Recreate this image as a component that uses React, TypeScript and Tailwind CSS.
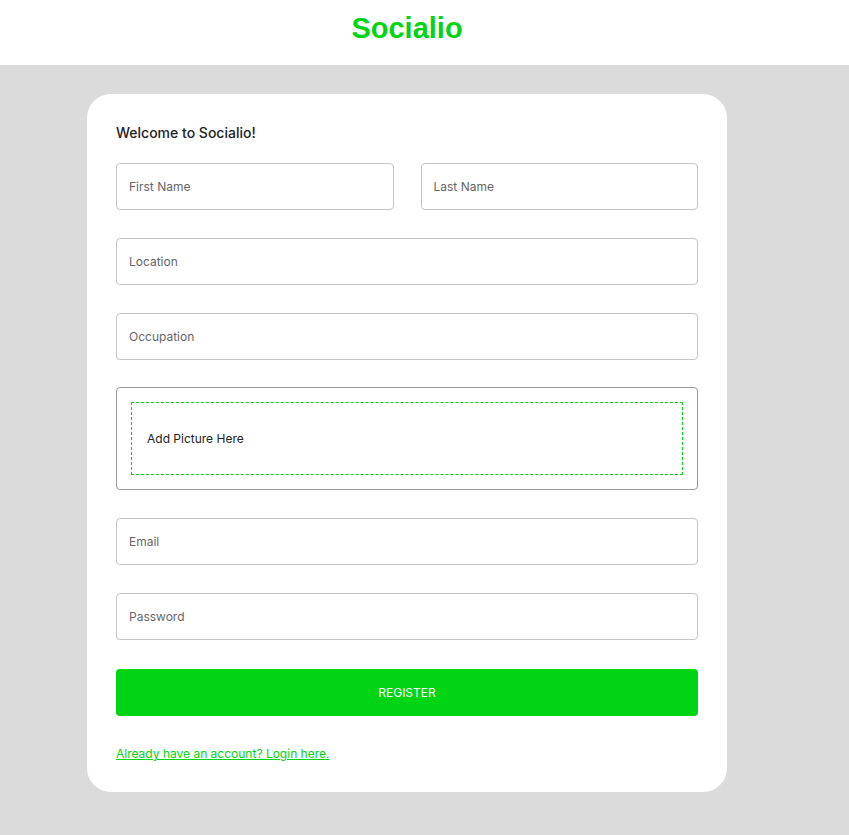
const fieldClass =
  "h-[47px] w-full rounded border border-[#c4c4c4] px-[12px] text-[12px] text-[#222] placeholder:text-[#666] outline-none";

const Field = ({ placeholder, type = "text" }: { placeholder: string; type?: string }) => (
  <input type={type} placeholder={placeholder} className={fieldClass} />
);

export default function App() {
  return (
    <div className="min-h-[835px] bg-[#dbdbdb] font-['Inter',sans-serif]">
      <header className="h-[65px] bg-white">
        <div className="flex w-[814px] justify-center pt-[9px]">
          <h1 className="font-['Liberation_Sans',Arial,sans-serif] text-[29px] font-bold leading-[38px] text-[#00d414]">
            Socialio
          </h1>
        </div>
      </header>

      <main className="flex w-[814px] justify-center pt-[29px]">
        <div className="w-[640px] rounded-[24px] bg-white px-[29px] pt-[29px] pb-[30px]">
          <h2 className="mb-[20px] text-[14px] leading-[20px] font-medium text-[#222]">Welcome to Socialio!</h2>

          <form className="flex flex-col gap-[28px]" onSubmit={(e) => e.preventDefault()}>
            <div className="grid grid-cols-2 gap-[27px]">
              <Field placeholder="First Name" />
              <Field placeholder="Last Name" />
            </div>
            <Field placeholder="Location" />
            <Field placeholder="Occupation" />

            <div className="-mt-[1px] h-[103px] rounded border border-[#999] p-[14px]">
              <div className="flex h-full items-center border border-dashed border-[#00d414] px-[15px]">
                <p className="text-[12px] text-[#222]">Add Picture Here</p>
              </div>
            </div>

            <Field placeholder="Email" />
            <Field placeholder="Password" type="password" />

            <button
              type="submit"
              className="mt-[1px] h-[47px] w-full rounded bg-[#00d414] text-[12px] uppercase text-white"
            >
              Register
            </button>
          </form>

          <p className="mt-[30px] text-[12px] leading-[16px] text-[#00d414] underline">
            Already have an account? Login here.
          </p>
        </div>
      </main>
    </div>
  );
}
